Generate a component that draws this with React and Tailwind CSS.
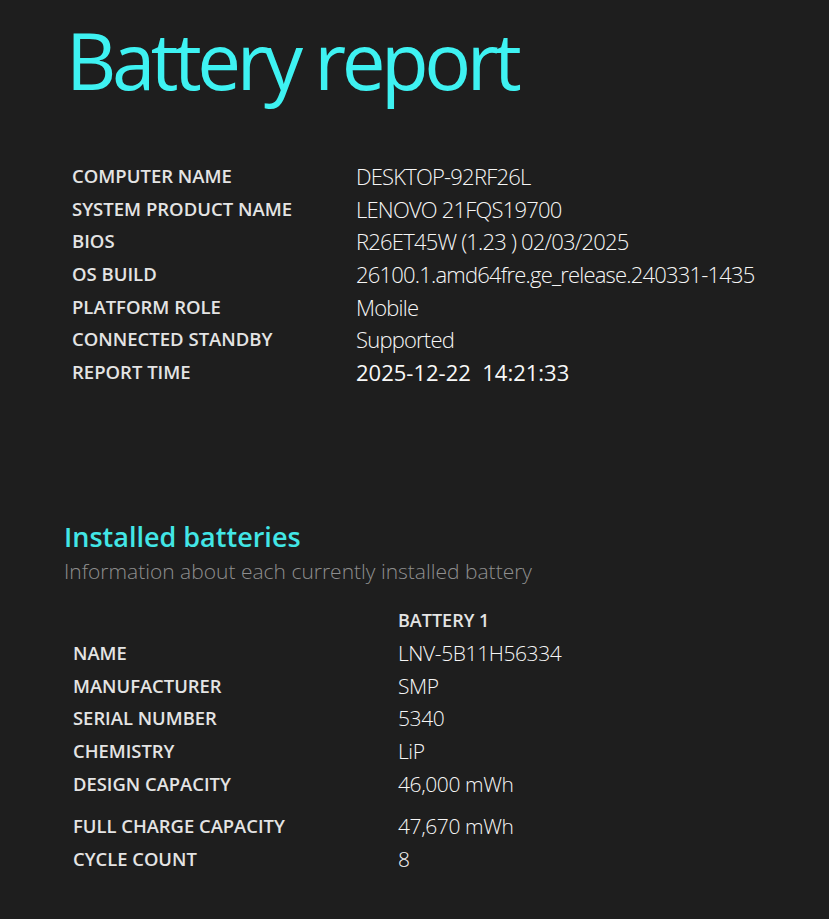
import React from "react";

const topRows = [
  ["COMPUTER NAME", "DESKTOP-92RF26L"],
  ["SYSTEM PRODUCT NAME", "LENOVO 21FQS19700"],
  ["BIOS", "R26ET45W (1.23 ) 02/03/2025"],
  ["OS BUILD", "26100.1.amd64fre.ge_release.240331-1435"],
  ["PLATFORM ROLE", "Mobile"],
  ["CONNECTED STANDBY", "Supported"],
];

const batteryRows = [
  ["NAME", "LNV-5B11H56334"],
  ["MANUFACTURER", "SMP"],
  ["SERIAL NUMBER", "5340"],
  ["CHEMISTRY", "LiP"],
  ["DESIGN CAPACITY", "46,000 mWh"],
];

export default function App() {
  return (
    <div className="min-h-screen w-full bg-[#1e1e1e] font-['Open_Sans','Noto_Sans',sans-serif] overflow-hidden">
      <div className="pl-[66px] pt-[21px]">
        <h1 className="text-[78px] leading-none font-normal tracking-[-4.5px] text-[#3ef2f2] whitespace-nowrap">Battery report</h1>
      </div>

      <div className="pl-[72px] mt-[61px]">
        {topRows.map(([l, v]) => (
          <div key={l} className="flex leading-[32.7px] h-[32.7px]">
            <div className="w-[284px] shrink-0 text-[18.5px] font-semibold text-[#e4e4e4] whitespace-nowrap">{l}</div>
            <div className="text-[22px] font-light tracking-[-0.8px] text-[#f6f6f6] whitespace-nowrap">{v}</div>
          </div>
        ))}
        <div className="flex leading-[32.7px] h-[32.7px]">
          <div className="w-[284px] shrink-0 text-[18.5px] font-semibold text-[#e4e4e4]">REPORT TIME</div>
          <div className="text-[22px] font-normal text-[#f8f8f8] whitespace-pre">2025-12-22  14:21:33</div>
        </div>
      </div>

      <div className="pl-[64px] mt-[134.5px]">
        <h2 className="text-[27px] leading-none font-semibold text-[#42e6e6] whitespace-nowrap">Installed batteries</h2>
        <p className="mt-[11px] text-[21px] leading-none font-light text-[#8e8e8e] whitespace-nowrap">
          Information about each currently installed battery
        </p>
      </div>

      <div className="pl-[73px] mt-[22px]">
        <div className="flex leading-[32.7px] h-[32.7px]">
          <div className="w-[325px] shrink-0" />
          <div className="text-[18px] font-semibold text-[#e4e4e4]">BATTERY 1</div>
        </div>
        {batteryRows.map(([l, v]) => (
          <div key={l} className="flex leading-[32.7px] h-[32.7px]">
            <div className="w-[325px] shrink-0 text-[18.4px] font-semibold text-[#e4e4e4] whitespace-nowrap">{l}</div>
            <div className="text-[21px] font-light tracking-[-0.4px] text-[#f6f6f6] whitespace-nowrap">{v}</div>
          </div>
        ))}
        <div className="flex leading-[32.7px] h-[32.7px] mt-[10px]">
          <div className="w-[325px] shrink-0 text-[18.4px] font-semibold text-[#e4e4e4] whitespace-nowrap">FULL CHARGE CAPACITY</div>
          <div className="text-[21px] font-light tracking-[-0.4px] text-[#f6f6f6] whitespace-nowrap">47,670 mWh</div>
        </div>
        <div className="flex leading-[32.7px] h-[32.7px]">
          <div className="w-[325px] shrink-0 text-[18.4px] font-semibold text-[#e4e4e4]">CYCLE COUNT</div>
          <div className="text-[21px] font-light tracking-[-0.4px] text-[#f6f6f6] whitespace-nowrap">8</div>
        </div>
      </div>
    </div>
  );
}
